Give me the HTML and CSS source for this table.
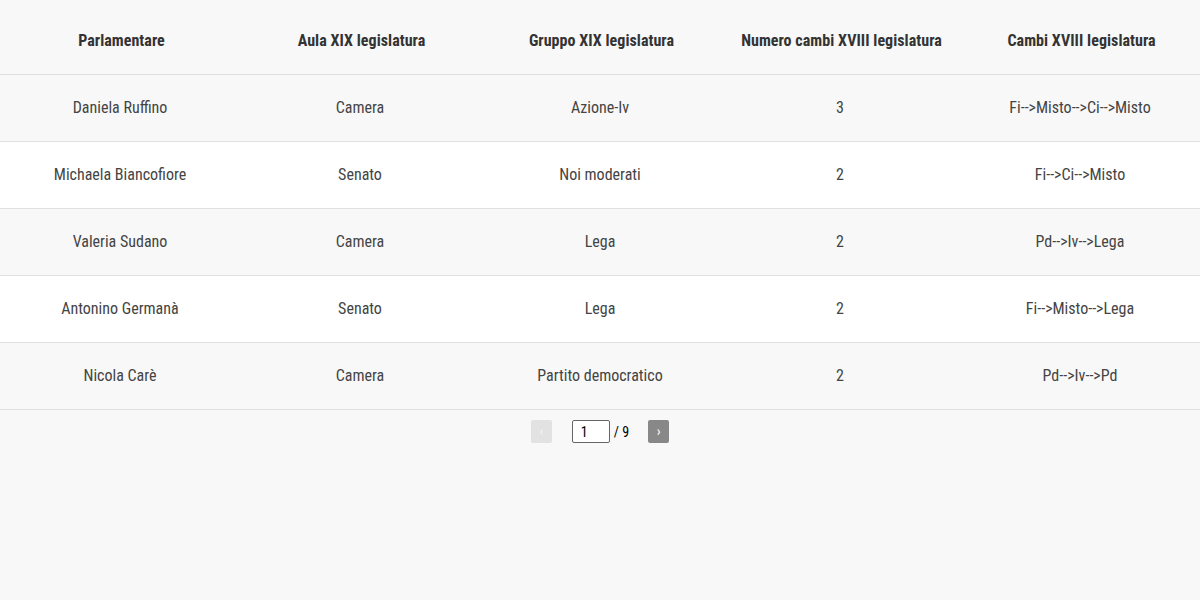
FILE: index.html
```html
<!DOCTYPE html>
<html lang="it">
<head>
<meta charset="utf-8">
<link rel="stylesheet" href="styles.css">
</head>
<body>
<div class="wrap">
  <table class="tbl">
    <thead>
      <tr>
        <th>Parlamentare</th>
        <th>Aula XIX legislatura</th>
        <th>Gruppo XIX legislatura</th>
        <th>Numero cambi XVIII legislatura</th>
        <th>Cambi XVIII legislatura</th>
      </tr>
    </thead>
    <tbody>
      <tr class="odd"><td>Daniela Ruffino</td><td>Camera</td><td>Azione-Iv</td><td>3</td><td>Fi--&gt;Misto--&gt;Ci--&gt;Misto</td></tr>
      <tr class="even"><td>Michaela Biancofiore</td><td>Senato</td><td>Noi moderati</td><td>2</td><td>Fi--&gt;Ci--&gt;Misto</td></tr>
      <tr class="odd"><td>Valeria Sudano</td><td>Camera</td><td>Lega</td><td>2</td><td>Pd--&gt;Iv--&gt;Lega</td></tr>
      <tr class="even"><td>Antonino Germanà</td><td>Senato</td><td>Lega</td><td>2</td><td>Fi--&gt;Misto--&gt;Lega</td></tr>
      <tr class="odd"><td>Nicola Carè</td><td>Camera</td><td>Partito democratico</td><td>2</td><td>Pd--&gt;Iv--&gt;Pd</td></tr>
    </tbody>
  </table>
  <div class="pager">
    <button class="pbtn prev" disabled>‹</button>
    <div class="pinfo">
      <input class="pinput" type="text" value="1">
      <span class="ptotal">/ 9</span>
    </div>
    <button class="pbtn next">›</button>
  </div>
</div>
</body>
</html>
```

FILE: styles.css
```css
html, body {
  margin: 0;
  padding: 0;
  background: #f8f8f8;
}
body {
  font-family: "Roboto Condensed", "Roboto", "Liberation Sans", sans-serif;
  color: #333;
}
.wrap {
  width: 1200px;
}
.tbl {
  width: 100%;
  border-collapse: collapse;
  table-layout: fixed;
}
.tbl th {
  height: 68px;
  padding: 6px 0 0 3px;
  font-size: 16px;
  font-weight: 700;
  letter-spacing: 0.05px;
  color: #333;
  text-align: center;
  vertical-align: middle;
  border-bottom: 1px solid #e0e0e0;
  background: #f8f8f8;
}
.tbl td {
  height: 65px;
  padding: 0 0 1px;
  font-size: 16px;
  font-weight: 400;
  color: #444;
  text-align: center;
  vertical-align: middle;
  border-bottom: 1px solid #e0e0e0;
}
.tbl tr.odd td { background: #f8f8f8; }
.tbl tr.even td { background: #ffffff; }
.pager {
  display: flex;
  justify-content: center;
  align-items: center;
  padding-top: 10px;
}
.pbtn {
  width: 21px;
  height: 23px;
  border: 0;
  border-radius: 2px;
  padding: 0;
  font-family: inherit;
  font-size: 14px;
  line-height: 23px;
  color: #fff;
}
.prev { background: #e2e2e2; color: #f2f2f2; }
.next { background: #888; }
.pinfo {
  display: flex;
  align-items: center;
  gap: 4px;
  margin: 0 19px 0 20px;
}
.pinput {
  width: 38px;
  height: 23px;
  box-sizing: border-box;
  border: 1px solid #666;
  border-radius: 2px;
  padding: 0 0 0 8px;
  font-family: inherit;
  font-size: 14px;
  color: #000;
  background: #fff;
}
.ptotal {
  font-size: 14px;
  font-weight: 400;
  color: #000;
}
```
